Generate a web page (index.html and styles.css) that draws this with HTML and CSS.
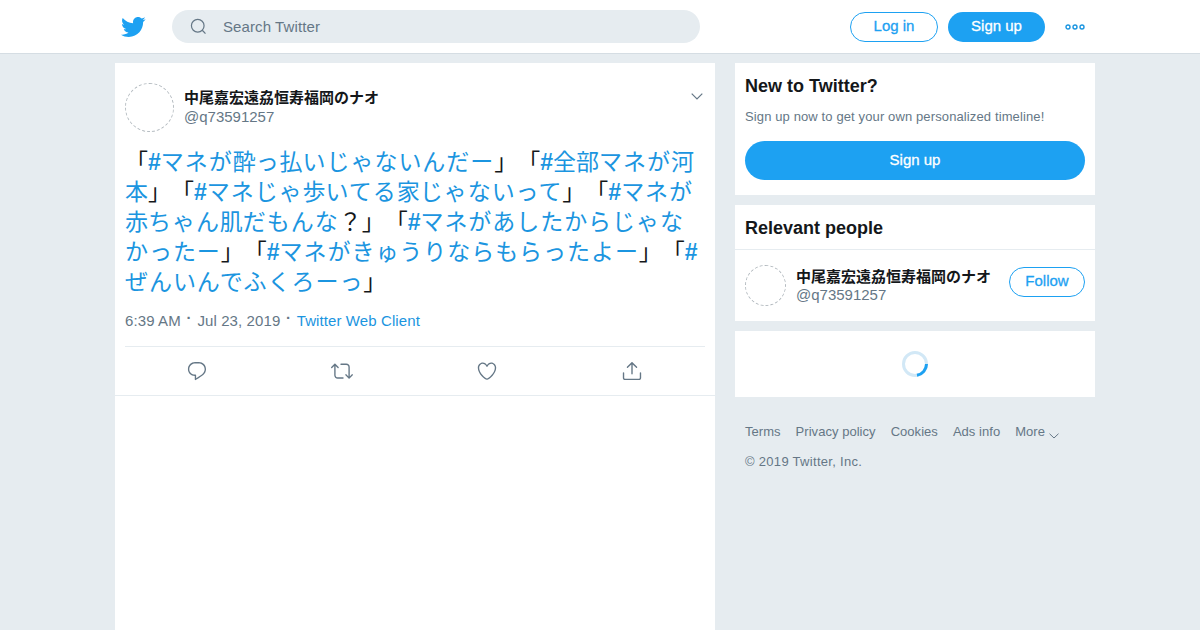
FILE: index.html
```html
<!DOCTYPE html>
<html lang="ja">
<head>
    <meta charset="UTF-8">
    <meta name="viewport" content="width=device-width, initial-scale=1.0">
    <title>Twitter</title>
    <link rel="stylesheet" href="styles.css">
</head>
<body>
    <header class="topbar">
        <div class="topbar-inner">
            <svg class="bird" viewBox="0 0 24 24"><path d="M23.643 4.937c-.835.37-1.732.62-2.675.733.962-.576 1.7-1.49 2.048-2.578-.9.534-1.897.922-2.958 1.13-.85-.904-2.06-1.47-3.4-1.47-2.572 0-4.658 2.086-4.658 4.66 0 .364.042.718.12 1.06-3.873-.195-7.304-2.05-9.602-4.868-.4.69-.63 1.49-.63 2.342 0 1.616.823 3.043 2.072 3.878-.764-.025-1.482-.234-2.11-.583v.06c0 2.257 1.605 4.14 3.737 4.568-.392.106-.803.162-1.227.162-.3 0-.593-.028-.877-.082.593 1.85 2.313 3.198 4.352 3.234-1.595 1.25-3.604 1.995-5.786 1.995-.376 0-.747-.022-1.112-.065 2.062 1.323 4.51 2.093 7.14 2.093 8.57 0 13.255-7.098 13.255-13.254 0-.2-.005-.402-.014-.602.91-.658 1.7-1.477 2.323-2.41z"/></svg>
            <div class="search">
                <svg class="search-icon" viewBox="0 0 18 18"><circle cx="8.2" cy="8.2" r="6.7"/><line x1="13" y1="13" x2="16.4" y2="16.6"/></svg>
                <span>Search Twitter</span>
            </div>
            <div class="topbar-actions">
                <a class="btn btn-outline btn-login">Log in</a>
                <a class="btn btn-solid btn-signup">Sign up</a>
                <svg class="more-dots" viewBox="0 0 20 6"><circle cx="3" cy="3" r="2"/><circle cx="10" cy="3" r="2"/><circle cx="17" cy="3" r="2"/></svg>
            </div>
        </div>
    </header>

    <main class="page">
        <section class="tweet">
            <div class="tweet-head">
                <div class="avatar avatar-large"></div>
                <div class="names">
                    <div class="name">中尾嘉宏遠劦恒寿福岡のナオ</div>
                    <div class="handle">@q73591257</div>
                </div>
                <svg class="caret" viewBox="0 0 12 7"><polyline points="0.7,0.7 6,6 11.3,0.7"/></svg>
            </div>
            <p class="tweet-text"><span class="plain">「</span><a><b>#</b>マネが<i>酔</i>っ<i>払</i>いじゃないんだー</a><span class="plain">」「</span><a><b>#</b><i>全部</i>マネが<i>河本</i></a><span class="plain">」「</span><a><b>#</b>マネじゃ<i>歩</i>いてる<i>家</i>じゃないって</a><span class="plain">」「</span><a><b>#</b>マネが<i>赤</i>ちゃん<i>肌</i>だもんな</a><span class="plain">？」「</span><a><b>#</b>マネがあしたからじゃなかったー</a><span class="plain">」「</span><a><b>#</b>マネがきゅうりならもらったよー</a><span class="plain">」「</span><a><b>#</b>ぜんいんでふくろーっ</a><span class="plain">」</span></p>
            <div class="tweet-meta">6:39 AM <span class="dot">·</span> Jul 23, 2019 <span class="dot">·</span> <a>Twitter Web Client</a></div>
            <div class="tweet-actions">
                <svg viewBox="0 0 24 24"><path d="M14.046 2.242l-4.148-.01h-.002c-4.374 0-7.8 3.427-7.8 7.802 0 4.098 3.186 7.206 7.465 7.37v3.828c0 .108.044.286.12.403.142.225.384.347.632.347.138 0 .277-.038.402-.118.264-.168 6.473-4.14 8.088-5.506 1.902-1.61 3.04-3.97 3.043-6.312v-.017c-.006-4.367-3.43-7.787-7.8-7.788zm3.787 12.972c-1.134.96-4.862 3.405-6.772 4.643V16.67c0-.414-.335-.75-.75-.75h-.396c-3.66 0-6.318-2.476-6.318-5.886 0-3.534 2.768-6.302 6.3-6.302l4.147.01h.002c3.532 0 6.3 2.766 6.302 6.296-.003 1.91-.942 3.844-2.514 5.176z"/></svg>
                <svg viewBox="0 0 24 24"><path d="M23.77 15.67c-.292-.293-.767-.293-1.06 0l-2.22 2.22V7.65c0-2.068-1.683-3.75-3.75-3.75h-5.85c-.414 0-.75.336-.75.75s.336.75.75.75h5.85c1.24 0 2.25 1.01 2.25 2.25v10.24l-2.22-2.22c-.293-.293-.768-.293-1.06 0s-.294.768 0 1.06l3.5 3.5c.145.147.337.22.53.22s.383-.072.53-.22l3.5-3.5c.294-.292.294-.767 0-1.06zm-10.66 3.28H7.26c-1.24 0-2.25-1.01-2.25-2.25V6.46l2.22 2.22c.148.147.34.22.532.22s.384-.073.53-.22c.293-.293.293-.768 0-1.06l-3.5-3.5c-.293-.294-.768-.294-1.06 0l-3.5 3.5c-.294.292-.294.767 0 1.06s.767.293 1.06 0l2.22-2.22V16.7c0 2.068 1.683 3.75 3.75 3.75h5.85c.414 0 .75-.336.75-.75s-.337-.75-.75-.75z"/></svg>
                <svg viewBox="0 0 24 24"><path d="M12 21.638h-.014C9.403 21.59 1.95 14.856 1.95 8.478c0-3.064 2.525-5.754 5.403-5.754 2.29 0 3.83 1.58 4.646 2.73.814-1.148 2.354-2.73 4.645-2.73 2.88 0 5.404 2.69 5.404 5.755 0 6.376-7.454 13.11-10.037 13.157H12zM7.354 4.225c-2.08 0-3.903 1.988-3.903 4.255 0 5.74 7.034 11.596 8.55 11.658 1.518-.062 8.55-5.917 8.55-11.658 0-2.267-1.823-4.255-3.903-4.255-2.528 0-3.94 2.936-3.952 2.965-.23.562-1.156.562-1.387 0-.014-.03-1.425-2.965-3.954-2.965z"/></svg>
                <svg viewBox="0 0 24 24"><path d="M17.53 7.47l-5-5c-.293-.293-.768-.293-1.06 0l-5 5c-.294.293-.294.768 0 1.06s.767.294 1.06 0l3.72-3.72V15c0 .414.336.75.75.75s.75-.336.75-.75V4.81l3.72 3.72c.146.147.338.22.53.22s.384-.072.53-.22c.293-.293.293-.767 0-1.06z"/><path d="M19.708 21.944H4.292C3.028 21.944 2 20.916 2 19.652V14c0-.414.336-.75.75-.75s.75.336.75.75v5.652c0 .437.355.792.792.792h15.416c.437 0 .792-.355.792-.792V14c0-.414.336-.75.75-.75s.75.336.75.75v5.652c0 1.264-1.028 2.292-2.292 2.292z"/></svg>
            </div>
        </section>

        <aside class="sidebar">
            <section class="card signup-card">
                <h2>New to Twitter?</h2>
                <p>Sign up now to get your own personalized timeline!</p>
                <a class="btn btn-solid btn-wide">Sign up</a>
            </section>
            <section class="card">
                <h2 class="people-title">Relevant people</h2>
                <div class="person">
                    <div class="avatar avatar-small"></div>
                    <div class="names">
                        <div class="name">中尾嘉宏遠劦恒寿福岡のナオ</div>
                        <div class="handle">@q73591257</div>
                    </div>
                    <a class="btn btn-outline btn-follow">Follow</a>
                </div>
            </section>
            <section class="card spinner-card">
                <svg class="spinner" viewBox="0 0 26 26"><circle class="track" cx="13" cy="13" r="11.5"/><path class="arc" d="M24.5 13A11.5 11.5 0 0 1 15 24.3"/></svg>
            </section>
            <footer class="foot">
                <ul class="foot-links">
                    <li>Terms</li>
                    <li>Privacy policy</li>
                    <li>Cookies</li>
                    <li>Ads info</li>
                    <li>More <svg class="foot-caret" viewBox="0 0 10 6"><polyline points="0.5,0.7 5,5 9.5,0.7"/></svg></li>
                </ul>
                <div class="copyright">© 2019 Twitter, Inc.</div>
            </footer>
        </aside>
    </main>
</body>
</html>
```

FILE: styles.css
```css
* {
    box-sizing: border-box;
}
body {
    margin: 0;
    height: 630px;
    overflow: hidden;
    background: #e6ecf0;
    color: #14171a;
    font-family: "Liberation Sans", "Noto Sans CJK JP", sans-serif;
    font-size: 14px;
}
a {
    color: #1b95e0;
}

/* top bar */
.topbar {
    height: 54px;
    background: white;
    border-bottom: 1px solid #d5dde3;
}
.topbar-inner {
    width: 980px;
    height: 53px;
    margin-left: 115px;
    padding: 0 10px 0 5px;
    display: flex;
    align-items: center;
}
.bird {
    width: 26px;
    height: 26px;
    fill: #1da1f2;
    flex: none;
}
.search {
    width: 528px;
    height: 33px;
    margin-left: 26px;
    padding-left: 18px;
    display: flex;
    align-items: center;
    background: #e6ecf0;
    border-radius: 17px;
    color: #657786;
    font-size: 15px;
    letter-spacing: 0.1px;
}
.search-icon {
    width: 17px;
    height: 17px;
    margin-right: 16px;
    fill: none;
    stroke: #657786;
    stroke-width: 1.3;
}
.topbar-actions {
    margin-left: auto;
    display: flex;
    align-items: center;
}
.btn {
    display: flex;
    align-items: center;
    justify-content: center;
    border-radius: 100px;
    font-size: 15px;
    padding-bottom: 2px;
    -webkit-text-stroke: 0.3px;
}
.btn-outline {
    border: 1px solid #1da1f2;
    color: #1da1f2;
    background: white;
}
.btn-solid {
    background: #1da1f2;
    color: white;
}
.btn-login {
    width: 88px;
    height: 30px;
}
.btn-signup {
    width: 97px;
    height: 30px;
    margin-left: 10px;
}
.more-dots {
    width: 20px;
    height: 6px;
    margin-left: 20px;
    fill: none;
    stroke: #1b95e0;
    stroke-width: 1.4;
}

/* columns */
.page {
    width: 980px;
    margin: 9px 0 0 115px;
    display: flex;
    gap: 20px;
    align-items: stretch;
    height: 567px;
}

/* tweet */
.tweet {
    width: 600px;
    background: white;
    padding: 0 10px;
}
.tweet-head {
    display: flex;
    align-items: center;
    padding-top: 20px;
}
.tweet-head .names {
    padding-bottom: 2px;
}
.avatar {
    border: 1px dashed #b4bbc0;
    border-radius: 50%;
    flex: none;
}
.avatar-large {
    width: 49px;
    height: 49px;
}
.avatar-small {
    width: 41px;
    height: 41px;
}
.names {
    margin-left: 10px;
}
.name {
    font-weight: bold;
    font-size: 15px;
    line-height: 20px;
}
.handle {
    color: #657786;
    font-size: 15px;
    line-height: 18px;
}
.person .handle {
    margin-top: -1px;
}
.caret {
    width: 12px;
    height: 7px;
    margin: 0 2px 22px auto;
    fill: none;
    stroke: #657786;
    stroke-width: 1.2;
}
.tweet-text {
    margin: 15px 0 0;
    font-size: 23px;
    line-height: 30px;
    letter-spacing: 0.95px;
    text-spacing-trim: space-all;
}
.tweet-text b {
    letter-spacing: 0;
}
.tweet-text i {
    font-style: normal;
    letter-spacing: 0;
}
.plain {
    color: #14171a;
    letter-spacing: 0;
}
.tweet-meta {
    margin-top: 14px;
    color: #657786;
    font-size: 15px;
    line-height: 20px;
    letter-spacing: 0.1px;
}
.dot {
    position: relative;
    top: -3px;
    margin: 0 1.5px;
    font-weight: bold;
}
.tweet-actions {
    margin: 15px -10px 0;
    padding: 0 72px 0 71px;
    height: 50px;
    position: relative;
    display: flex;
    align-items: center;
    justify-content: space-between;
    border-bottom: 1px solid #e6ecf0;
}
.tweet-actions::before {
    content: "";
    position: absolute;
    left: 10px;
    right: 10px;
    top: 0;
    border-top: 1px solid #e6ecf0;
}
.tweet-actions svg {
    width: 22px;
    height: 22px;
    fill: #657786;
}

/* sidebar */
.sidebar {
    width: 360px;
    display: flex;
    flex-direction: column;
    gap: 10px;
}
.card {
    background: white;
}
.card h2 {
    margin: 0;
    font-size: 18px;
    font-weight: bold;
    line-height: 24px;
}
.signup-card {
    height: 132px;
    padding: 11px 10px 0;
}
.signup-card p {
    margin: 10px 0 0;
    color: #657786;
    font-size: 13px;
    line-height: 18px;
    letter-spacing: 0.12px;
}
.btn-wide {
    height: 39px;
    margin-top: 15px;
}
.people-title {
    padding: 11px 10px 9px;
    height: 45px;
    border-bottom: 1px solid #e6ecf0;
}
.person {
    height: 71px;
    padding: 0 10px;
    display: flex;
    align-items: center;
}
.btn-follow {
    width: 76px;
    height: 30px;
    margin: 0 0 8px auto;
}
.spinner-card {
    height: 66px;
    display: flex;
    align-items: center;
    justify-content: center;
}
.spinner {
    width: 26px;
    height: 26px;
    fill: none;
    stroke-width: 3;
}
.track {
    stroke: #d2e8f6;
}
.arc {
    stroke: #1da1f2;
}

/* footer */
.foot {
    padding: 10px 10px 0;
    color: #657786;
    font-size: 13px;
    line-height: 30px;
    letter-spacing: 0.04px;
}
.foot-links {
    margin: 0;
    padding: 0;
    list-style: none;
    display: flex;
    gap: 15px;
}
.foot-caret {
    width: 10px;
    height: 6px;
    margin-bottom: -3px;
    fill: none;
    stroke: #657786;
    stroke-width: 1;
}
.copyright {
    letter-spacing: 0.3px;
}
```
